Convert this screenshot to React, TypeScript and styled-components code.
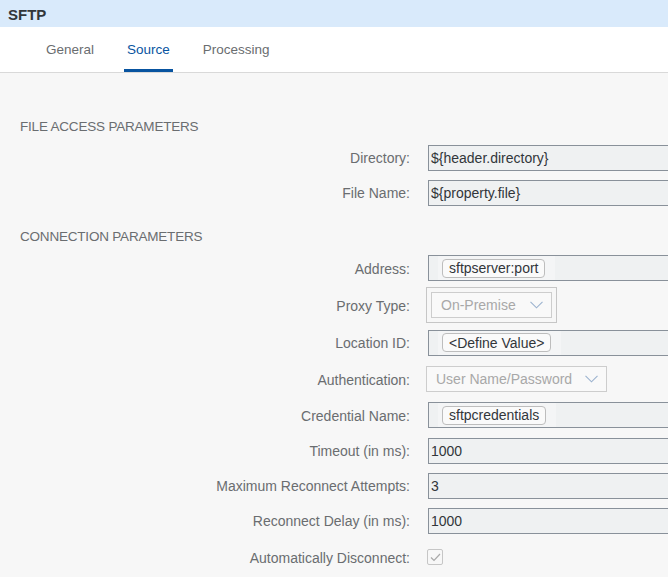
import React from 'react';
import styled, { createGlobalStyle } from 'styled-components';

const GlobalStyle = createGlobalStyle`
  html, body {
    margin: 0;
    padding: 0;
    background: #f7f7f7;
    overflow: hidden;
  }
  body {
    font-family: 'Liberation Sans', Arial, sans-serif;
    color: #32363a;
  }
`;

type Field =
  | { kind: 'input'; label: string; value: string; h?: number }
  | { kind: 'token'; label: string; value: string; h?: number }
  | { kind: 'select'; label: string; value: string; framed?: boolean; width: number; h?: number }
  | { kind: 'check'; label: string; h?: number };

const fileAccess: Field[] = [
  { kind: 'input', label: 'Directory:', value: '${header.directory}' },
  { kind: 'input', label: 'File Name:', value: '${property.file}' },
];

const connection: Field[] = [
  { kind: 'token', label: 'Address:', value: 'sftpserver:port', h: 36 },
  { kind: 'select', label: 'Proxy Type:', value: 'On-Premise', framed: true, width: 131, h: 38 },
  { kind: 'token', label: 'Location ID:', value: '<Define Value>', h: 37 },
  { kind: 'select', label: 'Authentication:', value: 'User Name/Password', width: 181, h: 36 },
  { kind: 'token', label: 'Credential Name:', value: 'sftpcredentials', h: 36 },
  { kind: 'input', label: 'Timeout (in ms):', value: '1000' },
  { kind: 'input', label: 'Maximum Reconnect Attempts:', value: '3' },
  { kind: 'input', label: 'Reconnect Delay (in ms):', value: '1000' },
  { kind: 'check', label: 'Automatically Disconnect:', h: 38 },
];

const tabs = ['General', 'Source', 'Processing'];

function Chevron() {
  return (
    <svg width="13" height="8" viewBox="0 0 13 8">
      <polyline points="0.5,0.8 6.5,6.8 12.5,0.8" fill="none" stroke="#9cb3cf" strokeWidth="1.1" />
    </svg>
  );
}

function Control({ field }: { field: Field }) {
  switch (field.kind) {
    case 'input':
      return <TextBox>{field.value}</TextBox>;
    case 'token':
      return (
        <TextBox>
          <TokenArea>
            <Token>{field.value}</Token>
          </TokenArea>
        </TextBox>
      );
    case 'select': {
      const box = (
        <SelectBox style={{ width: field.width - (field.framed ? 10 : 0) }}>
          <span>{field.value}</span>
          <Chevron />
        </SelectBox>
      );
      return field.framed ? <SelectFrame>{box}</SelectFrame> : box;
    }
    case 'check':
      return (
        <CheckBox>
          <svg width="11" height="9" viewBox="0 0 11 9">
            <polyline points="1,4.5 4,7.5 10,1" fill="none" stroke="#a9a9a9" strokeWidth="1.2" />
          </svg>
        </CheckBox>
      );
  }
}

function Section({ title, fields }: { title: string; fields: Field[] }) {
  return (
    <>
      <SectionTitle>{title}</SectionTitle>
      {fields.map(f => (
        <Row key={f.label} $h={f.h ?? 35}>
          <Label>{f.label}</Label>
          <Control field={f} />
        </Row>
      ))}
    </>
  );
}

export default function App() {
  return (
    <Page>
      <GlobalStyle />
      <Header>SFTP</Header>
      <TabBar>
        {tabs.map(t => (
          <Tab key={t} $active={t === 'Source'}>
            {t}
          </Tab>
        ))}
      </TabBar>
      <Content>
        <Section title="File Access Parameters" fields={fileAccess} />
        <Spacer />
        <Section title="Connection Parameters" fields={connection} />
      </Content>
    </Page>
  );
}

const Page = styled.div`
  width: 668px;
  height: 577px;
  overflow: hidden;
  background: #f7f7f7;
`;

const Header = styled.div`
  height: 27px;
  background: #d9eafb;
  display: flex;
  align-items: center;
  padding: 1px 0 0 8px;
  box-sizing: border-box;
  font-size: 15px;
  font-weight: 700;
  color: #32363a;
`;

const TabBar = styled.div`
  height: 45px;
  background: #ffffff;
  border-bottom: 1px solid #d9d9d9;
  display: flex;
  align-items: stretch;
  gap: 27px;
  padding-left: 43px;
`;

const Tab = styled.div<{ $active?: boolean }>`
  display: flex;
  align-items: center;
  padding: 3px 3px 0;
  font-size: 13.5px;
  color: ${p => (p.$active ? '#0854a0' : '#6a6d70')};
  border-bottom: 3px solid ${p => (p.$active ? '#0854a0' : 'transparent')};
`;

const Content = styled.div`
  padding-top: 43px;
`;

const Spacer = styled.div`
  height: 16px;
`;

const SectionTitle = styled.div`
  height: 20px;
  line-height: 21px;
  margin-bottom: 4px;
  padding-left: 20px;
  font-size: 13.5px;
  letter-spacing: -0.2px;
  text-transform: uppercase;
  color: #6a6d70;
`;

const Row = styled.div<{ $h: number }>`
  display: grid;
  grid-template-columns: 410px 1fr;
  column-gap: 16px;
  align-items: center;
  height: ${p => p.$h}px;
`;

const Label = styled.div`
  text-align: right;
  font-size: 14px;
  padding-top: 1px;
  color: #6a6d70;
  white-space: nowrap;
`;

const TextBox = styled.div`
  box-sizing: border-box;
  width: 300px;
  height: 26px;
  margin-left: 2px;
  border: 1px solid #89919a;
  background: #eff1f2;
  display: flex;
  align-items: center;
  padding-left: 2px;
  font-size: 14px;
  color: #32363a;
  white-space: nowrap;
`;

const TokenArea = styled.div`
  align-self: stretch;
  display: flex;
  align-items: center;
  margin-left: 7px;
  padding: 0 10px 0 4px;
  background: #f4f5f6;
`;

const Token = styled.span`
  box-sizing: border-box;
  height: 19px;
  display: inline-flex;
  align-items: center;
  padding: 0 6px;
  border: 1px solid #bdbdbd;
  border-radius: 4px;
  background: #fafafa;
  font-size: 14px;
  color: #32363a;
`;

const SelectFrame = styled.div`
  box-sizing: border-box;
  width: 131px;
  height: 36px;
  padding: 4px;
  border: 1px solid #c6c6c6;
`;

const SelectBox = styled.div`
  box-sizing: border-box;
  height: 26px;
  border: 1px solid #cdcdcd;
  background: #f9f9f9;
  display: flex;
  align-items: center;
  justify-content: space-between;
  padding: 0 8px 0 9px;
  font-size: 14px;
  color: #a8a8a8;
  white-space: nowrap;
`;

const CheckBox = styled.div`
  box-sizing: border-box;
  width: 16px;
  height: 16px;
  margin-left: 1px;
  border: 1px solid #c6c6c6;
  border-radius: 2px;
  display: flex;
  align-items: center;
  justify-content: center;
`;
